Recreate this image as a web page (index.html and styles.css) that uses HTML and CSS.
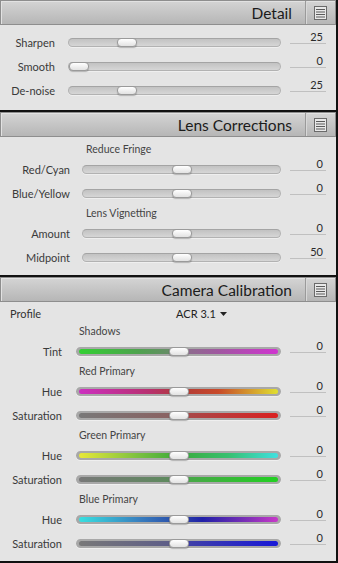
FILE: index.html
```html
<!DOCTYPE html>
<html lang="en">
<head>
    <meta charset="UTF-8">
    <title>Develop Panels</title>
    <link rel="stylesheet" href="styles.css">
</head>
<body>
    <!-- Detail -->
    <section class="panel">
        <header class="panel-head">
            <h2>Detail</h2>
            <span class="menu"><svg width="13" height="14" viewBox="0 0 13 14"><rect x="0.5" y="0.5" width="12" height="13" fill="#e8e8e8" stroke="#6a6a6a"/><path d="M2 3.5h9M2 6h9M2 8.5h9M2 11h9" stroke="#5a5a5a" stroke-width="1"/></svg></span>
        </header>
        <div class="panel-body detail">
            <div class="row slider-row"><label>Sharpen</label><div class="track"><span class="thumb" style="--p: 0.25"></span></div><span class="val">25</span></div>
            <div class="row slider-row"><label>Smooth</label><div class="track"><span class="thumb" style="--p: 0"></span></div><span class="val">0</span></div>
            <div class="row slider-row"><label>De-noise</label><div class="track"><span class="thumb" style="--p: 0.25"></span></div><span class="val">25</span></div>
        </div>
    </section>

    <!-- Lens Corrections -->
    <section class="panel">
        <header class="panel-head">
            <h2>Lens Corrections</h2>
            <span class="menu"><svg width="13" height="14" viewBox="0 0 13 14"><rect x="0.5" y="0.5" width="12" height="13" fill="#e8e8e8" stroke="#6a6a6a"/><path d="M2 3.5h9M2 6h9M2 8.5h9M2 11h9" stroke="#5a5a5a" stroke-width="1"/></svg></span>
        </header>
        <div class="panel-body lens">
            <div class="row caption"><span></span><span>Reduce Fringe</span></div>
            <div class="row slider-row"><label>Red/Cyan</label><div class="track"><span class="thumb" style="--p: 0.5"></span></div><span class="val">0</span></div>
            <div class="row slider-row"><label>Blue/Yellow</label><div class="track"><span class="thumb" style="--p: 0.5"></span></div><span class="val">0</span></div>
            <div class="row caption"><span></span><span>Lens Vignetting</span></div>
            <div class="row slider-row"><label>Amount</label><div class="track"><span class="thumb" style="--p: 0.5"></span></div><span class="val">0</span></div>
            <div class="row slider-row"><label>Midpoint</label><div class="track"><span class="thumb" style="--p: 0.5"></span></div><span class="val">50</span></div>
        </div>
    </section>

    <!-- Camera Calibration -->
    <section class="panel last">
        <header class="panel-head">
            <h2>Camera Calibration</h2>
            <span class="menu"><svg width="13" height="14" viewBox="0 0 13 14"><rect x="0.5" y="0.5" width="12" height="13" fill="#e8e8e8" stroke="#6a6a6a"/><path d="M2 3.5h9M2 6h9M2 8.5h9M2 11h9" stroke="#5a5a5a" stroke-width="1"/></svg></span>
        </header>
        <div class="panel-body calib">
            <div class="profile"><span>Profile</span><span class="profile-pick">ACR 3.1 <svg width="7" height="4" viewBox="0 0 7 4"><path d="M0 0h7L3.5 4z" fill="#222"/></svg></span></div>
            <div class="row caption"><span></span><span>Shadows</span></div>
            <div class="row slider-row"><label>Tint</label><div class="track color"><i class="band tint"></i><span class="thumb" style="--p: 0.5"></span></div><span class="val">0</span></div>
            <div class="row caption"><span></span><span>Red Primary</span></div>
            <div class="row slider-row"><label>Hue</label><div class="track color"><i class="band red-hue"></i><span class="thumb" style="--p: 0.5"></span></div><span class="val">0</span></div>
            <div class="row slider-row"><label>Saturation</label><div class="track color"><i class="band red-sat"></i><span class="thumb" style="--p: 0.5"></span></div><span class="val">0</span></div>
            <div class="row caption"><span></span><span>Green Primary</span></div>
            <div class="row slider-row"><label>Hue</label><div class="track color"><i class="band green-hue"></i><span class="thumb" style="--p: 0.5"></span></div><span class="val">0</span></div>
            <div class="row slider-row"><label>Saturation</label><div class="track color"><i class="band green-sat"></i><span class="thumb" style="--p: 0.5"></span></div><span class="val">0</span></div>
            <div class="row caption"><span></span><span>Blue Primary</span></div>
            <div class="row slider-row"><label>Hue</label><div class="track color"><i class="band blue-hue"></i><span class="thumb" style="--p: 0.5"></span></div><span class="val">0</span></div>
            <div class="row slider-row"><label>Saturation</label><div class="track color"><i class="band blue-sat"></i><span class="thumb" style="--p: 0.5"></span></div><span class="val">0</span></div>
        </div>
    </section>
</body>
</html>
```

FILE: styles.css
```css
html, body {
    margin: 0;
    padding: 0;
    background-color: #111;
    font-family: Lato, "Open Sans", sans-serif;
    color: #3a3a3a;
}

.panel {
    margin: 0 2px 2px 0;
    background-color: #e4e4e4;
}

.panel.last {
    margin-bottom: 0;
    height: 284px;
}

.panel-head {
    display: flex;
    align-items: center;
    justify-content: flex-end;
    height: 23px;
    border: 1px solid #8e8e8e;
    box-shadow: inset 1px 1px 0 #e2e2e2;
    background: linear-gradient(#d4d4d4, #b6b6b6);
}

.panel-head h2 {
    margin: 0;
    padding-right: 13px;
    font-size: 15.5px;
    font-weight: normal;
    color: #1b1b1b;
}

.menu {
    display: flex;
    align-items: center;
    justify-content: center;
    width: 29px;
    height: 23px;
    border-left: 1px solid #9a9a9a;
    box-shadow: inset 1px 0 0 #d8d8d8;
}

.panel-body {
    display: flex;
    flex-direction: column;
    padding-right: 10px;
    font-size: 11px;
}

.row {
    display: grid;
    grid-template-columns: calc(var(--label) + var(--gap)) 1fr 45px;
    align-items: center;
}

.detail { --label: 55px; --gap: 13px; padding-top: 5px; padding-bottom: 8px; }
.lens { --label: 70px; --gap: 12px; padding-top: 4px; padding-bottom: 6px; }
.calib { --label: 62px; --gap: 14px; padding-top: 2px; }

.slider-row {
    height: 24px;
}

.caption {
    height: 16px;
    color: #444;
    font-size: 10.5px;
}

.caption span:last-child {
    margin-left: 4px;
    grid-column: 2 / 4;
}

.calib .caption span:last-child {
    margin-left: 3px;
}

label {
    padding-right: var(--gap);
    text-align: right;
    white-space: nowrap;
}

.track {
    position: relative;
    height: 7px;
    border: 1px solid #b2b2b2;
    border-top-color: #a4a4a4;
    border-radius: 5px;
    background: linear-gradient(#c2c2c2, #d6d6d6);
    box-shadow: 0 1px 0 #efefef;
}

.track.color {
    height: 5px;
    border: 2px solid #a8a8a8;
    border-radius: 5px;
    background: #a8a8a8;
}

.band {
    position: absolute;
    left: 1px;
    right: 1px;
    top: 0;
    bottom: 0;
    border-radius: 3px;
}

.tint { background: linear-gradient(to right, #33d033, #4ea24e 30%, #6c8a6c 48%, #8a708a 52%, #a058a0 70%, #d034d0); }
.red-hue { background: linear-gradient(to right, #cc30c0, #b83070 35%, #b03a3a 50%, #c84a2a 70%, #e0e030); }
.red-sat { background: linear-gradient(to right, #787878, #8a6262 45%, #a84848 55%, #da2020); }
.green-hue { background: linear-gradient(to right, #e8e838, #7ac040 30%, #3aaa3a 50%, #38c070 75%, #40e0e0); }
.green-sat { background: linear-gradient(to right, #787878, #5e8a5e 45%, #48a848 55%, #22d022); }
.blue-hue { background: linear-gradient(to right, #38e0e0, #3880c0 30%, #2a4aa8 50%, #2020a8 62%, #8030b8 85%, #c838c8); }
.blue-sat { background: linear-gradient(to right, #787878, #5e5e88 45%, #4040a8 55%, #1818d8); }

.thumb {
    position: absolute;
    top: 50%;
    left: calc((100% - 20px) * var(--p, 0));
    width: 20px;
    height: 9px;
    margin-top: -4.5px;
    box-sizing: border-box;
    border: 1px solid #9a9a9a;
    border-radius: 4px;
    background: linear-gradient(#ffffff, #e2e2e2);
    box-shadow: 0 1px 1px rgba(0, 0, 0, 0.25);
}

.val {
    align-self: start;
    margin: 1px 0 0 9px;
    padding-right: 3px;
    height: 12px;
    line-height: 12px;
    text-align: right;
    border-bottom: 1px solid #c0c0c0;
    color: #2a2a2a;
}

.profile {
    display: flex;
    align-items: center;
    height: 19px;
    padding-left: 10px;
    color: #333;
}

.profile-pick {
    margin-left: 135px;
    display: flex;
    align-items: center;
    gap: 4px;
    color: #222;
}
```
